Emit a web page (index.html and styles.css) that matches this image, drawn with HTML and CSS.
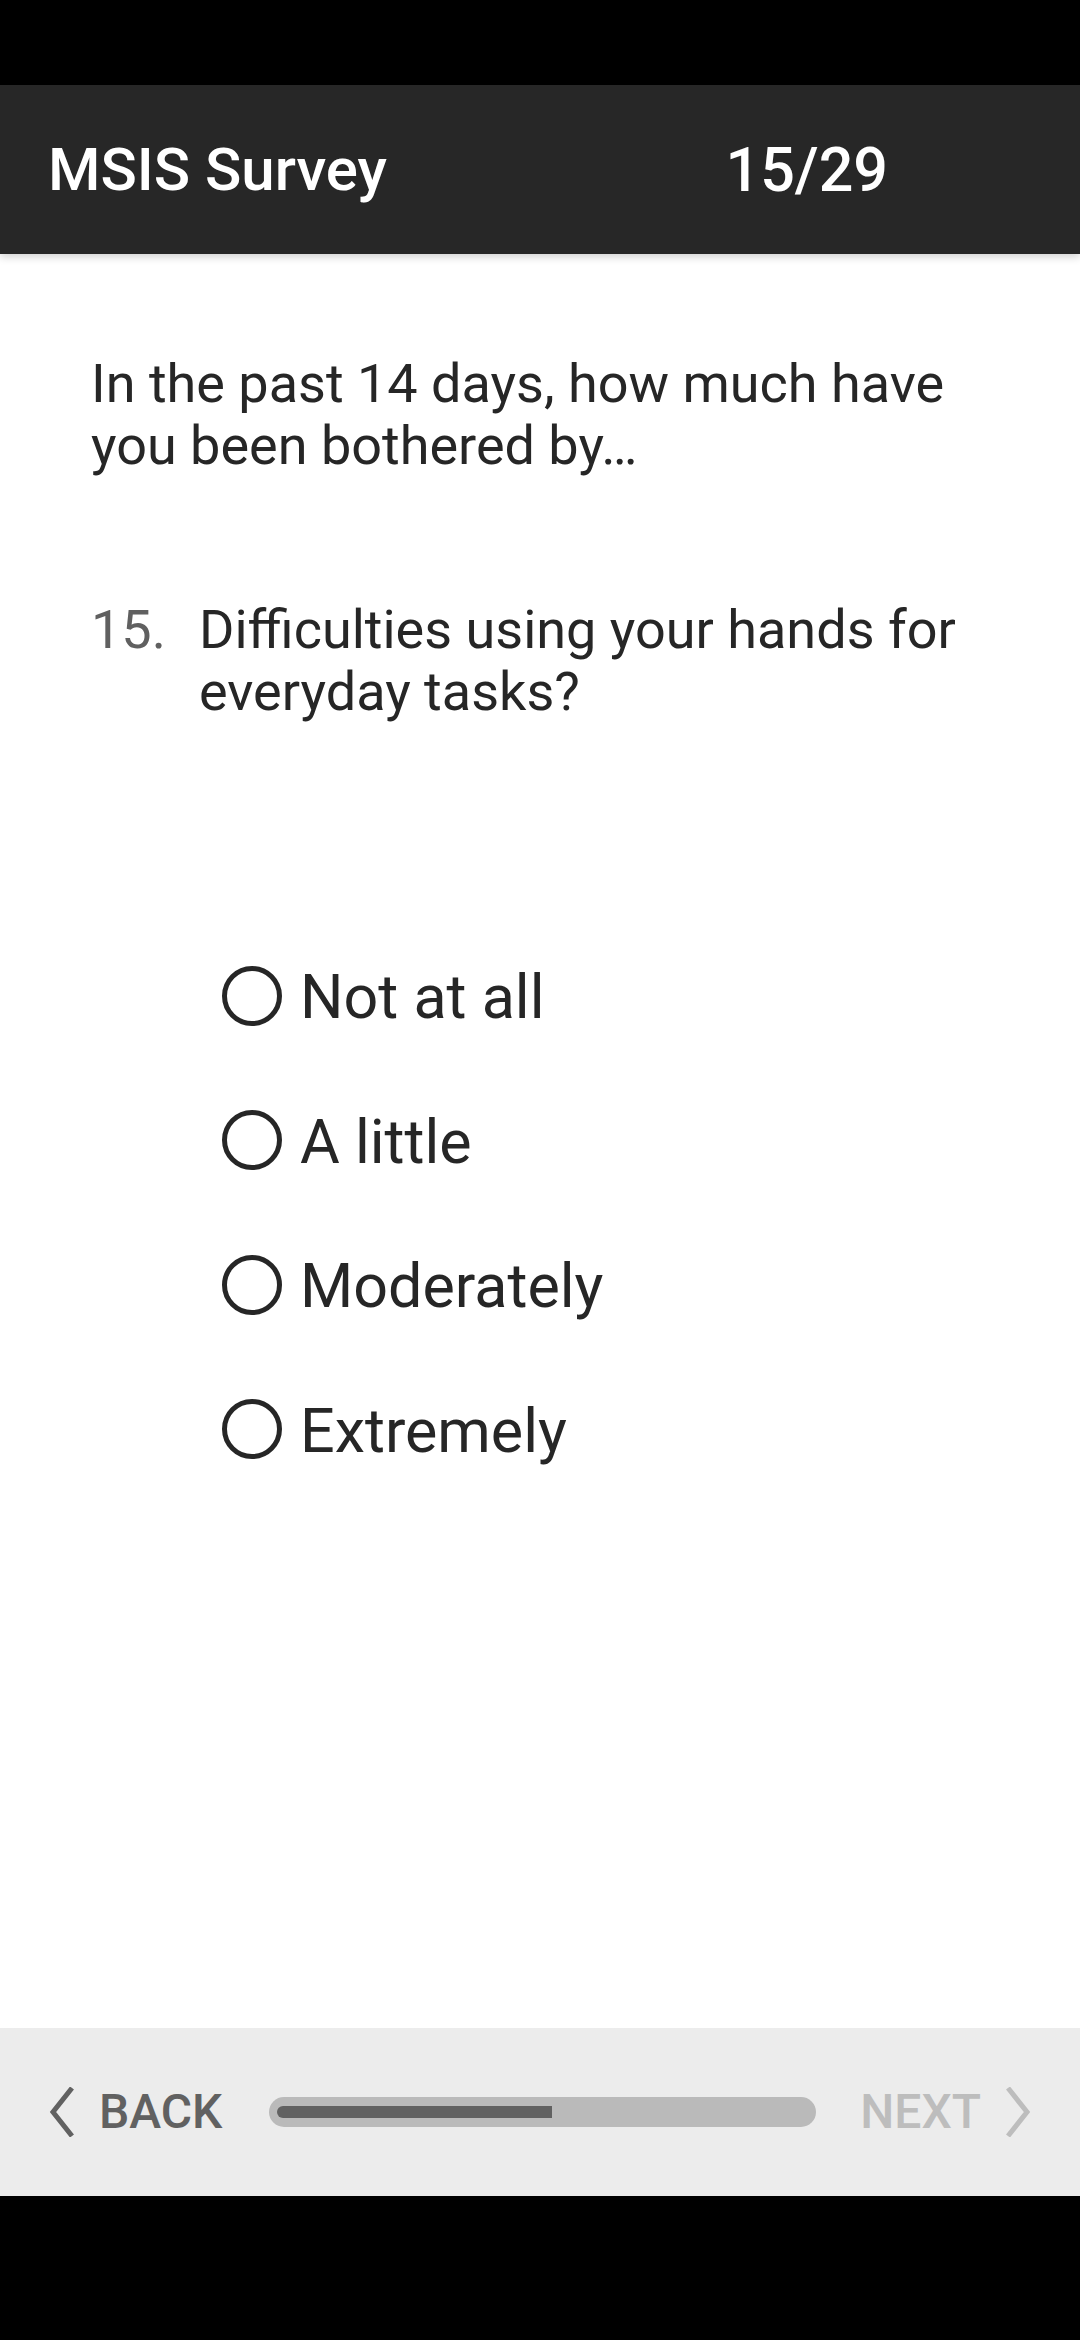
FILE: index.html
```html
<!DOCTYPE html>
<html lang="en">
<head>
<meta charset="utf-8">
<title>MSIS Survey</title>
<link rel="stylesheet" href="styles.css">
</head>
<body>
<div class="screen">
  <div class="status-bar"></div>
  <header class="app-bar">
    <div class="app-title">MSIS Survey</div>
    <div class="app-counter">15/29</div>
  </header>
  <main class="content">
    <p class="intro">In the past 14 days, how much have you been bothered by…</p>
    <div class="question">
      <span class="q-num">15.</span>
      <span class="q-text">Difficulties using your hands for everyday tasks?</span>
    </div>
    <ul class="options">
      <li class="option"><span class="radio"></span><span class="opt-label">Not at all</span></li>
      <li class="option"><span class="radio"></span><span class="opt-label">A little</span></li>
      <li class="option"><span class="radio"></span><span class="opt-label">Moderately</span></li>
      <li class="option"><span class="radio"></span><span class="opt-label">Extremely</span></li>
    </ul>
  </main>
  <footer class="nav-bar">
    <div class="nav-btn back">
      <svg class="chev" width="26" height="50" viewBox="0 0 26 50"><polyline points="23,1 4,25 23,49" fill="none" stroke="currentColor" stroke-width="5"/></svg>
      <span>BACK</span>
    </div>
    <div class="progress"><div class="progress-fill" style="width: 51.7%"></div></div>
    <div class="nav-btn next">
      <span>NEXT</span>
      <svg class="chev" width="26" height="50" viewBox="0 0 26 50"><polyline points="3,1 22,25 3,49" fill="none" stroke="currentColor" stroke-width="5"/></svg>
    </div>
  </footer>
  <div class="sys-nav"></div>
</div>
</body>
</html>
```
FILE: styles.css
```css
* { box-sizing: border-box; }
html, body {
  margin: 0;
  padding: 0;
  background: #000;
}
body {
  font-family: Roboto, "Noto Sans", "Liberation Sans", sans-serif;
  color: #262626;
}
.screen {
  width: 1080px;
  height: 2340px;
  display: flex;
  flex-direction: column;
  background: #fff;
}
.status-bar {
  height: 85px;
  background: #000;
  flex: none;
}
.app-bar {
  height: 169px;
  flex: none;
  background: #272727;
  color: #fff;
  display: flex;
  align-items: center;
  justify-content: space-between;
  padding: 0 192px 0 48px;
  font-size: 60px;
  font-weight: 500;
  box-shadow: 0 3px 8px rgba(0, 0, 0, 0.18);
  position: relative;
  z-index: 1;
}
.app-title { line-height: 70px; }
.app-counter { line-height: 70px; font-size: 61px; }
.content {
  flex: 1;
  background: #fff;
  padding: 99px 50px 0 91px;
}
.intro {
  margin: 0;
  font-size: 54px;
  line-height: 62px;
}
.question {
  display: flex;
  margin-top: 122px;
  font-size: 54px;
  line-height: 62px;
}
.q-num {
  flex: none;
  width: 108px;
  color: #606060;
}
.q-text { flex: 1; }
.options {
  list-style: none;
  margin: 202px 0 0 0;
  padding: 0 0 0 131px;
}
.option {
  height: 144.5px;
  display: flex;
  align-items: center;
  font-size: 61px;
  line-height: 70px;
}
.radio {
  flex: none;
  width: 60px;
  height: 60px;
  border: 5px solid #262626;
  border-radius: 50%;
  margin-right: 18px;
  margin-top: -3px;
}
.nav-bar {
  height: 168px;
  flex: none;
  background: #ececec;
  display: flex;
  align-items: center;
  padding: 0 49px;
  font-size: 48px;
  font-weight: 500;
}
.nav-btn {
  display: flex;
  align-items: center;
  gap: 24px;
  line-height: 56px;
}
.back { color: #616161; }
.next { color: #bdbdbd; }
.chev { display: block; flex: none; }
.progress {
  flex: 1;
  height: 30px;
  margin: 0 44px 0 47px;
  background: #bababa;
  border-radius: 15px;
  padding: 9px 8px;
}
.progress-fill {
  height: 12px;
  background: #616161;
  border-radius: 6px 0 0 6px;
}
.sys-nav {
  height: 144px;
  flex: none;
  background: #000;
}
```
